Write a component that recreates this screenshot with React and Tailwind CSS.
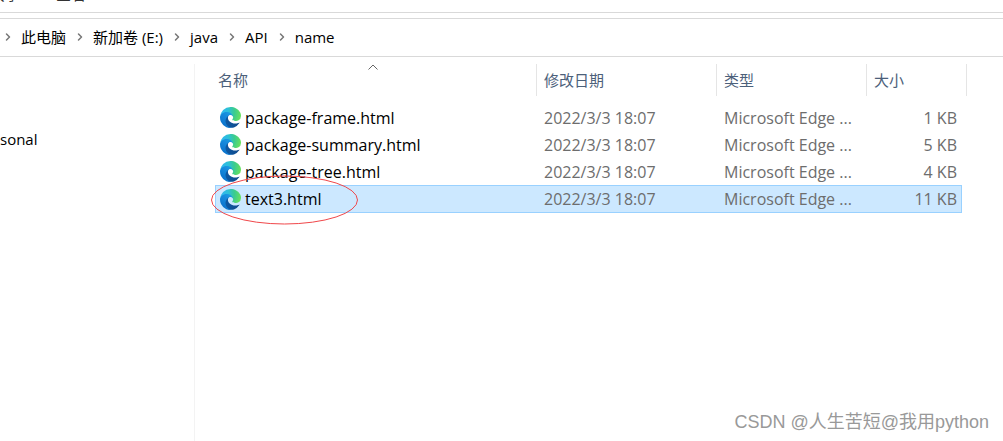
import { ChevronRight } from 'lucide-react';

const crumbs = ['此电脑', '新加卷 (E:)', 'java', 'API', 'name'];

const files = [
  { name: 'package-frame.html', date: '2022/3/3 18:07', type: 'Microsoft Edge ...', size: '1 KB' },
  { name: 'package-summary.html', date: '2022/3/3 18:07', type: 'Microsoft Edge ...', size: '5 KB' },
  { name: 'package-tree.html', date: '2022/3/3 18:07', type: 'Microsoft Edge ...', size: '4 KB' },
  { name: 'text3.html', date: '2022/3/3 18:07', type: 'Microsoft Edge ...', size: '11 KB', selected: true },
];

function EdgeIcon() {
  return (
    <svg viewBox="0 0 256 256" className="size-[21px] shrink-0" aria-hidden="true">
      <defs>
        <linearGradient id="edge-base" x1="59" y1="177" x2="238" y2="177" gradientUnits="userSpaceOnUse">
          <stop offset="0" stopColor="#0c59a4" />
          <stop offset="1" stopColor="#114a8b" />
        </linearGradient>
        <linearGradient id="edge-wave" x1="140" y1="75" x2="40" y2="220" gradientUnits="userSpaceOnUse">
          <stop offset="0" stopColor="#1b9de2" />
          <stop offset="0.4" stopColor="#1589dc" />
          <stop offset="1" stopColor="#0c74cc" />
        </linearGradient>
        <radialGradient id="edge-top" cx="26" cy="60" r="230" gradientUnits="userSpaceOnUse">
          <stop offset="0" stopColor="#2fb8ee" />
          <stop offset="0.35" stopColor="#2dc0d8" />
          <stop offset="0.65" stopColor="#3acb90" />
          <stop offset="1" stopColor="#66e05e" />
        </radialGradient>
      </defs>
      <path fill="url(#edge-base)" d="M231 190.5c-3.4 1.8-6.9 3.4-10.5 4.7a101.5 101.5 0 0 1-35.9 6.5c-47.3 0-88.5-32.5-88.5-74.3a31.5 31.5 0 0 1 16.4-27.3c-42.8 1.8-53.8 46.4-53.8 72.5 0 74 68.1 81.4 82.8 81.4 7.9 0 19.8-2.3 27-4.6l1.3-.4a128.3 128.3 0 0 0 66.6-52.8 4 4 0 0 0-5.4-5.7z" />
      <path fill="url(#edge-wave)" d="M105.7 241.4a79.2 79.2 0 0 1-22.7-21.3 80.7 80.7 0 0 1 29.5-120c3.2-1.5 8.5-4.1 15.6-4a32.4 32.4 0 0 1 25.7 13 31.9 31.9 0 0 1 6.3 18.7c0-.2 24.5-79.6-80-79.6-43.9 0-80 41.6-80 78.2a130.2 130.2 0 0 0 12.1 56 128 128 0 0 0 156.4 67 75.5 75.5 0 0 1-62.8-8z" />
      <path fill="url(#edge-top)" d="M152.3 148.9c-.8 1-3.3 2.5-3.3 5.7 0 2.6 1.7 5.1 4.7 7.2 14.4 10 41.5 8.7 41.6 8.7 10.7 0 21.1-2.9 30.3-8.3A61.4 61.4 0 0 0 256 109.4c.3-22.4-8-37.3-11.3-43.9C223.5 24.1 177.8 0 128 0A128 128 0 0 0 0 126.2c.5-36.5 36.8-66 80-66 3.5 0 23.5.3 42 10.1 16.3 8.5 24.9 18.9 30.8 29.2 6.2 10.7 7.3 24.1 7.3 29.5s-2.7 13.3-7.8 19.9z" />
    </svg>
  );
}

function FileRow({ file }) {
  const cell = file.selected ? 'h-7 border-y border-[#99d1ff] bg-[#cce8ff]' : 'h-[27px]';

  return (
    <tr>
      <td className={`${cell} relative p-0 text-black ${file.selected ? 'border-l' : 'pl-px'}`}>
        <div className="flex items-center gap-1 pl-1">
          <EdgeIcon />
          <span className="leading-5">{file.name}</span>
        </div>
        {file.selected && (
          <svg viewBox="0 0 147 50" className="absolute -left-[5px] -top-[11px] z-10 h-[50px] w-[147px]" aria-hidden="true">
            <ellipse cx="73.5" cy="25" rx="73" ry="24" fill="none" stroke="#f0474a" strokeWidth="1" />
          </svg>
        )}
      </td>
      <td className={`${cell} p-0 pl-[7px]`}>{file.date}</td>
      <td className={`${cell} p-0 pl-[7px]`}>{file.type}</td>
      <td className={`${cell} p-0 text-right ${file.selected ? 'border-r pr-1' : 'pr-[5px]'}`}>{file.size}</td>
    </tr>
  );
}

export default function App() {
  return (
    <div className="relative flex min-h-screen flex-col overflow-hidden bg-white font-['Open_Sans','Noto_Sans_CJK_SC',sans-serif] text-[15px] text-black">
      <div className="flex h-[13px] items-end gap-9 overflow-hidden border-b border-[#d9d9d9] pb-2 leading-5 text-[#333]">
        <button type="button" className="-ml-[10px] h-5">共享</button>
        <button type="button" className="h-5">查看</button>
      </div>

      <nav className="mt-[5px] flex h-[39px] items-center border-y border-[#d9d9d9] pb-[2px]">
        {crumbs.map((crumb) => (
          <div key={crumb} className="flex items-center">
            <ChevronRight className="mx-[2px] size-3 text-[#777]" strokeWidth={3} />
            <button type="button" className="pl-[5px] pr-[6px] leading-5">{crumb}</button>
          </div>
        ))}
      </nav>

      <div className="flex flex-1 pt-[7px]">
        <aside className="w-[195px] shrink-0 border-r border-[#f3f3f3] pt-[65px] leading-5">
          <a href="#personal" className="block">sonal</a>
        </aside>

        <main className="flex-1 pl-5">
          <table className="w-[752px] table-fixed border-separate border-spacing-0 text-base leading-5 text-[#6d6d6d]">
            <colgroup>
              <col className="w-[322px]" />
              <col className="w-[180px]" />
              <col className="w-[150px]" />
              <col className="w-[95px]" />
              <col className="w-[5px]" />
            </colgroup>
            <thead className="text-left text-[15px] text-[#4c607a]">
              <tr>
                <th className="relative h-8 border-r border-[#e5e5e5] p-0 pl-[3px] font-normal">
                  名称
                  <svg viewBox="0 0 10 6" className="absolute left-[153px] top-0 h-[6px] w-[10px]" aria-hidden="true">
                    <path d="M0.5 5.5L5 1l4.5 4.5" fill="none" stroke="#666" />
                  </svg>
                </th>
                <th className="border-r border-[#e5e5e5] p-0 pl-[7px] font-normal">修改日期</th>
                <th className="border-r border-[#e5e5e5] p-0 pl-[7px] font-normal">类型</th>
                <th colSpan={2} className="border-r border-[#e5e5e5] p-0 pl-[7px] font-normal">大小</th>
              </tr>
            </thead>
            <tbody className="before:block before:h-2">
              {files.map((file) => (
                <FileRow key={file.name} file={file} />
              ))}
            </tbody>
          </table>
        </main>
      </div>

      <div className="absolute bottom-[7px] right-[14px] font-['Liberation_Sans','Noto_Sans_CJK_SC',sans-serif] text-lg leading-6 text-[#999]">
        CSDN @人生苦短@我用python
      </div>
    </div>
  );
}
